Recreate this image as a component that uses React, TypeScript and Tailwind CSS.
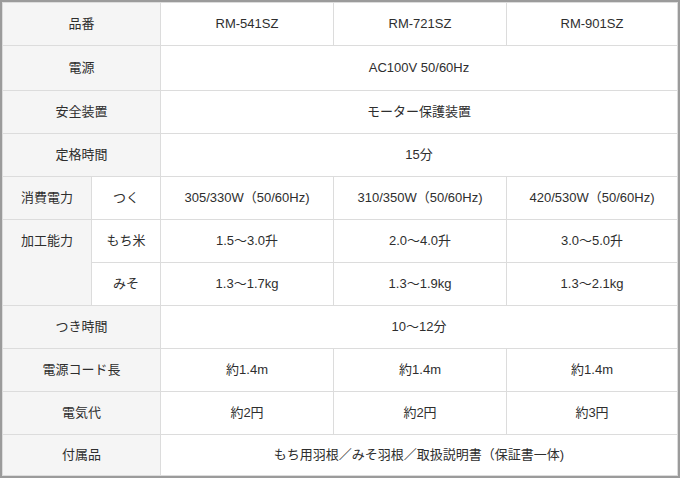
import React from 'react';

const font = { fontFamily: '"Liberation Sans", "Noto Sans CJK JP", sans-serif' };

const th = 'bg-[#f5f5f5] border border-[#dcdcdc] font-normal text-center align-middle';
const td = 'bg-white border border-[#dcdcdc] text-center align-middle';

const Row: React.FC<{ label: string; values: string[]; h?: string }> = ({ label, values, h = 'h-[43px]' }) => (
  <tr className={h}>
    <th colSpan={2} className={th}>
      {label}
    </th>
    {values.length === 1 ? (
      <td colSpan={3} className={td}>
        {values[0]}
      </td>
    ) : (
      values.map((v, i) => (
        <td key={i} className={td}>
          {v}
        </td>
      ))
    )}
  </tr>
);

const App: React.FC = () => {
  return (
    <div className="w-[680px] h-[478px] bg-[#9b9b9b] pt-[2px] pl-[2px] pr-[3px] pb-[3px]" style={font}>
      <table className="w-[675px] table-fixed border-collapse bg-white text-[13px] text-[#2e2e2e]">
        <colgroup>
          <col className="w-[89px]" />
          <col className="w-[69px]" />
          <col className="w-[173px]" />
          <col className="w-[173px]" />
          <col className="w-[171px]" />
        </colgroup>
        <tbody>
          <Row label="品番" values={['RM-541SZ', 'RM-721SZ', 'RM-901SZ']} />
          <Row label="電源" values={['AC100V 50/60Hz']} h="h-[45px]" />
          <Row label="安全装置" values={['モーター保護装置']} />
          <Row label="定格時間" values={['15分']} />
          <tr className="h-[43px]">
            <th className={th}>消費電力</th>
            <td className={td}>つく</td>
            <td className={td}>305/330W（50/60Hz)</td>
            <td className={td}>310/350W（50/60Hz)</td>
            <td className={td}>420/530W（50/60Hz)</td>
          </tr>
          <tr className="h-[43px]">
            <th rowSpan={2} className={`${th} !align-top p-0`}>
              <div className="h-[42px] flex items-center justify-center">加工能力</div>
            </th>
            <td className={td}>もち米</td>
            <td className={td}>1.5～3.0升</td>
            <td className={td}>2.0～4.0升</td>
            <td className={td}>3.0～5.0升</td>
          </tr>
          <tr className="h-[43px]">
            <td className={td}>みそ</td>
            <td className={td}>1.3～1.7kg</td>
            <td className={td}>1.3～1.9kg</td>
            <td className={td}>1.3～2.1kg</td>
          </tr>
          <Row label="つき時間" values={['10～12分']} />
          <Row label="電源コード長" values={['約1.4m', '約1.4m', '約1.4m']} />
          <Row label="電気代" values={['約2円', '約2円', '約3円']} />
          <Row label="付属品" values={['もち用羽根／みそ羽根／取扱説明書（保証書一体)']} h="h-[41px]" />
        </tbody>
      </table>
    </div>
  );
};

export default App;
